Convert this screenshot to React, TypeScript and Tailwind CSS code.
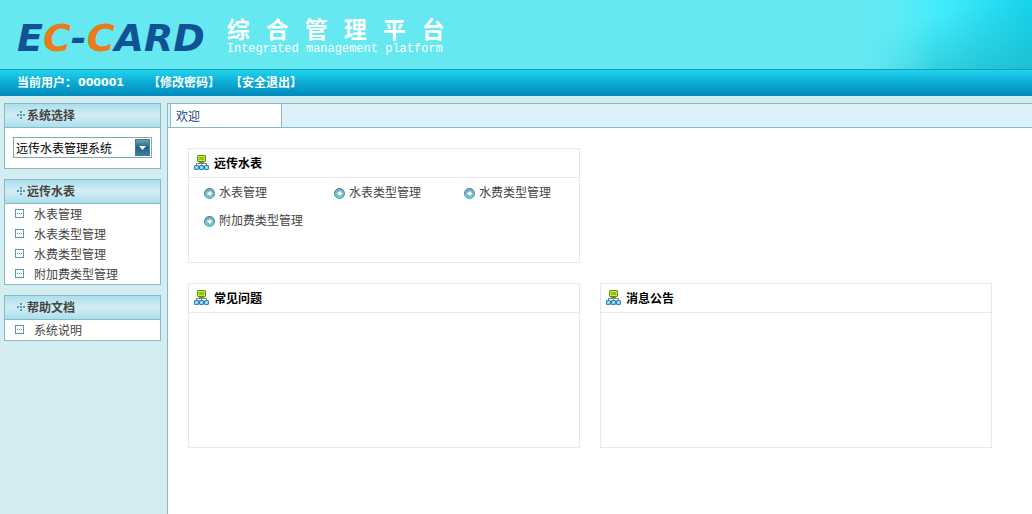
import React from 'react';

type IMenuGroup = {
  title: string;
  items: string[];
};

const meterMenus = ['水表管理', '水表类型管理', '水费类型管理', '附加费类型管理'];

const menuGroups: IMenuGroup[] = [
  { title: '远传水表', items: meterMenus },
  { title: '帮助文档', items: ['系统说明'] },
];

const DotsIcon = () => (
  <svg
    className="h-[9px] w-[9px] shrink-0"
    viewBox="0 0 9 9"
    fill="#4f9db3"
    shapeRendering="crispEdges"
    aria-hidden="true"
  >
    <path d="M3 0h2v2H3zM3 3h2v2H3zM0 3h2v2H0zM6 3h2v2H6zM3 6h2v2H3z" />
  </svg>
);

const NodeIcon = () => (
  <svg
    className="mt-[5px] h-[9px] w-[9px] shrink-0"
    viewBox="0 0 9 9"
    shapeRendering="crispEdges"
    aria-hidden="true"
  >
    <path d="M0 0h9v9H0z" fill="#4f9db3" />
    <path d="M1 1h7v7H1z" fill="#fff" />
    <path d="M2 4h1v1H2zM4 4h1v1H4zM6 4h1v1H6z" fill="#4b8fa5" />
  </svg>
);

const SitemapIcon = () => (
  <svg className="h-4 w-4 shrink-0" viewBox="0 0 16 16" aria-hidden="true">
    <path d="M7 6h2v2H7zM2 8h11v2h-1V9H8v1H7V9H3v1H2z" fill="#858585" />
    <path d="M5 7h5v1H5z" fill="#6f7f60" />
    <rect x="3.5" y="0.5" width="8" height="6" rx="0.5" fill="#c6e84a" stroke="#5b9413" />
    <path d="M5 2h5v3H5z" fill="#8cc800" />
    <g fill="#8ccdf0" stroke="#2a86bf">
      <rect x="0.5" y="10.5" width="4" height="4" rx="0.5" />
      <rect x="5.5" y="10.5" width="4" height="4" rx="0.5" />
      <rect x="10.5" y="10.5" width="4" height="4" rx="0.5" />
    </g>
    <path d="M2 12h1v1H2zM7 12h1v1H7zM12 12h1v1h-1z" fill="#d4f0ff" />
  </svg>
);

const ArrowIcon = () => (
  <svg className="h-[11px] w-[11px] shrink-0" viewBox="0 0 11 11" aria-hidden="true">
    <defs>
      <linearGradient id="arrow-ring" x1="0" y1="0" x2="0" y2="1">
        <stop offset="0" stopColor="#3f7089" />
        <stop offset="1" stopColor="#45a3ab" />
      </linearGradient>
      <linearGradient id="arrow-face" x1="0" y1="0" x2="0" y2="1">
        <stop offset="0" stopColor="#86aebf" />
        <stop offset="1" stopColor="#62d6d8" />
      </linearGradient>
    </defs>
    <circle cx="5.5" cy="5.5" r="5" fill="url(#arrow-face)" stroke="url(#arrow-ring)" />
    <path
      d="M5 2l4 3.500L5 9V7H3V4h2z"
      fill="#fff"
      stroke="#5f93a5"
      strokeWidth="0.5"
    />
  </svg>
);

const Header = () => (
  <header>
    <div className="flex h-[69px] bg-[#66e8f1]">
      <h1 className="mt-[15px] ml-[17px] h-[46px] font-['DejaVu_Sans'] text-[38px] leading-[46px] font-bold whitespace-nowrap text-[#0f5396] italic">
        E<span className="text-[#e87b1a]">C</span>-
        <span className="text-[#e87b1a]">C</span>ARD
      </h1>
      <div className="mt-[18px] ml-[22px] w-[218px] shrink-0 text-white">
        <p className="text-[23px] leading-[25px] font-bold [text-align-last:justify]">
          综合管理平台
        </p>
        <p className="font-['Liberation_Mono'] text-[12px] leading-[12px] whitespace-nowrap">
          Integrated management platform
        </p>
      </div>
      <div className="ml-auto w-[172px] bg-[linear-gradient(to_right,#66e8f1,transparent_45%),linear-gradient(165deg,transparent_30%,#20b8c8c0_100%),linear-gradient(to_right,#60f0fb,#40eafb_50%,#14d6f0)]" />
    </div>
    <nav className="flex h-[27px] items-center border-t border-b border-t-[#1a9bb5] border-b-[#0a8abb] bg-linear-to-b from-[#20d4ee] via-[#0cabd2] to-[#008cc0] pl-[17px] font-bold text-white">
      <span className="flex gap-px">
        当前用户：
        <span className="font-['DejaVu_Sans'] text-[11px]">000001</span>
      </span>
      <a href="#password" className="ml-[24px]">
        【修改密码】
      </a>
      <a href="#logout" className="ml-[10px]">
        【安全退出】
      </a>
    </nav>
  </header>
);

const SidePanel = ({
  title,
  children,
}: {
  title: string;
  children: React.ReactNode;
}) => (
  <section className="border border-[#86b9c9] bg-white">
    <h2 className="flex h-6 items-center gap-px border-b border-[#86b9c9] bg-linear-to-b from-[#aadfec] via-[#d3edf3] to-[#aadfec] pl-3 font-bold text-[#444]">
      <DotsIcon />
      {title}
    </h2>
    {children}
  </section>
);

const SystemSelect = () => (
  <div className="px-2 pt-[9px] pb-[10px]">
    <div className="relative">
      <select
        aria-label="系统选择"
        className="block h-[21px] w-full appearance-none border border-[#7fabb0] bg-white pt-[2px] pl-[2px] text-black"
      >
        <option>远传水表管理系统</option>
      </select>
      <span className="pointer-events-none absolute top-[2px] right-[2px] flex h-[17px] w-[15px] items-center justify-center border border-[#3f7f9a] bg-linear-to-b from-[#6a9fb4] via-[#1f6585] to-[#3b7d97]">
        <svg className="h-1 w-[7px]" viewBox="0 0 7 4" fill="#fff" aria-hidden="true">
          <path d="M0 0h7L3.5 4z" />
        </svg>
      </span>
    </div>
  </div>
);

const Sidebar = () => (
  <aside className="flex w-[167px] shrink-0 flex-col gap-[10px] pr-[6px] pl-1">
    <SidePanel title="系统选择">
      <SystemSelect />
    </SidePanel>
    {menuGroups.map((group) => (
      <SidePanel key={group.title} title={group.title}>
        <ul>
          {group.items.map((item) => (
            <li key={item} className="h-5 pl-[10px]">
              <a href="#menu" className="flex h-5 items-start gap-[10px] text-[#444]">
                <NodeIcon />
                <span className="pt-[2px]">{item}</span>
              </a>
            </li>
          ))}
        </ul>
      </SidePanel>
    ))}
  </aside>
);

const Card = ({
  title,
  className,
  children,
}: {
  title: string;
  className: string;
  children?: React.ReactNode;
}) => (
  <section className={`border border-[#e8e8e8] ${className}`}>
    <h3 className="flex h-[29px] items-center gap-1 border-b border-[#e8e8e8] pl-[5px] font-bold text-black">
      <SitemapIcon />
      <span className="pt-[2px]">{title}</span>
    </h3>
    {children}
  </section>
);

const Main = () => (
  <main className="flex-1 border-t border-l border-[#86b9c9] bg-white">
    <div className="flex h-6 border-b border-[#86b9c9] bg-[#dcf0f7] pl-[2px]">
      <button
        type="button"
        className="w-[112px] border-r border-l border-[#86b9c9] bg-white pt-[2px] pl-[5px] text-left text-[#15428b]"
      >
        欢迎
      </button>
    </div>
    <div className="grid grid-cols-2 gap-5 py-5 pr-10 pl-5">
      <Card title="远传水表" className="min-h-[115px]">
        <ul className="grid grid-cols-[130px_130px_1fr] pt-px pl-[15px]">
          {meterMenus.map((item) => (
            <li key={item}>
              <a
                href="#menu"
                className="flex h-7 items-center gap-1 whitespace-nowrap text-[#444]"
              >
                <ArrowIcon />
                {item}
              </a>
            </li>
          ))}
        </ul>
      </Card>
      <Card title="常见问题" className="col-start-1 min-h-[165px]" />
      <Card title="消息公告" className="min-h-[165px]" />
    </div>
  </main>
);

const App = () => {
  return (
    <div className="flex min-h-screen flex-col bg-[#d3edf1] font-['Liberation_Sans','Noto_Sans_CJK_SC',sans-serif] text-[12px] leading-[18px]">
      <Header />
      <div className="flex flex-1 pt-[7px]">
        <Sidebar />
        <Main />
      </div>
    </div>
  );
};

export default App;
